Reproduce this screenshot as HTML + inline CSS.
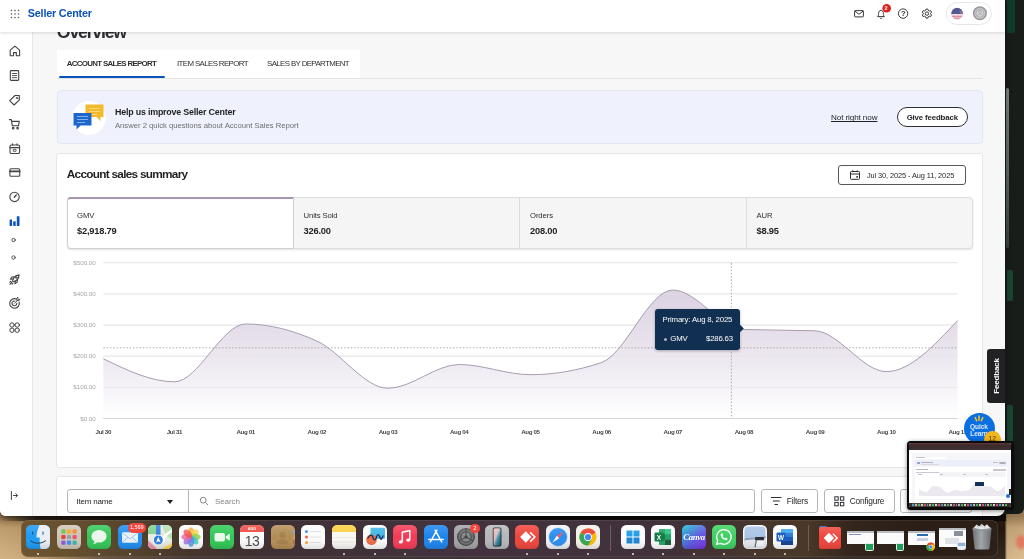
<!DOCTYPE html>
<html lang="en">
<head>
<meta charset="utf-8">
<title>Seller Center - Overview</title>
<style>
*{box-sizing:border-box;margin:0;padding:0}
html,body{width:1024px;height:559px;overflow:hidden}
body{font-family:"Liberation Sans",sans-serif;color:#2e2f32;position:relative;
 background:#2a211c;}
.abs{position:absolute}
#root{position:absolute;left:0;top:0;width:1024px;height:559px;overflow:hidden;filter:blur(.4px)}
/* desktop wallpaper */
#desk{position:absolute;left:0;top:0;width:1024px;height:559px;
 background:linear-gradient(180deg,rgba(70,45,15,.45) 516px,rgba(70,45,15,.12) 528px,rgba(255,240,210,.10) 559px),linear-gradient(90deg,#cfac7c 0px,#c8a574 20px,#9c7c52 55px,#5c4636 105px,#35282a 190px,#2b2024 420px,#2e2228 700px,#251b17 850px,#1e140e 1004.500px,#cfae82 1007px,#d8b88c 1024px);}
#desk:after{content:"";position:absolute;left:0;top:514px;width:1006px;height:7px;background:linear-gradient(90deg,rgba(20,14,12,.0) 0,rgba(20,14,12,.8) 36px,rgba(12,9,9,.95) 200px,rgba(12,9,9,.95) 1006px)}
#desk:before{content:"";position:absolute;left:1016px;top:535px;width:10px;height:14px;border-radius:50%;background:#e2705a;filter:blur(1.500px);opacity:.85}
#rstrip{position:absolute;left:1005px;top:0;width:19px;height:514px;border-radius:0 0 6px 0;background:#181d1a}
/* browser window */
#win{position:absolute;left:0;top:0;width:1005px;height:516px;background:#f7f7f8;border-radius:0 0 8px 6px;overflow:hidden;
 box-shadow:0 2px 6px rgba(0,0,0,.5)}
#topbar{position:absolute;left:0;top:0;width:1005px;height:32px;background:#fff;box-shadow:0 1px 3px rgba(0,0,0,.14);z-index:5}
#side{position:absolute;left:0;top:32px;width:33px;height:490px;background:#fff;border-right:1px solid #e6e6e8;z-index:4}
.t{position:absolute;white-space:nowrap;line-height:1}

#ov{left:56.800px;top:24.400px;font-size:17.800px;font-weight:bold;color:#2e2f32;letter-spacing:-1.25px}
#tabs{position:absolute;left:57px;top:50px;width:303px;height:28px;background:#fff}
#tabs .t{font-size:7.900px;top:10.300px;color:#2e2f32;letter-spacing:-.62px}
#tabline{position:absolute;left:57px;top:78px;width:925px;height:1px;background:#e3e4e6}
#tabact{position:absolute;left:59px;top:76px;width:106px;height:2px;background:#0b53b8;border-radius:1px}
#banner{position:absolute;left:57px;top:90px;width:926px;height:54px;background:#eff1fc;border:1px solid #e3e6f3;border-radius:4px}
.card{position:absolute;background:#fff;border:1px solid #e6e6e8;border-radius:3px}

.mk{top:212px;font-size:7.700px;color:#2e2f32;letter-spacing:-.1px}
.mv{top:226.700px;font-size:9.300px;font-weight:bold;color:#1f2023;letter-spacing:-.2px}

.btn{height:24px;background:#fff;border:1px solid #b4b5b9;border-radius:3px}
</style>
</head>
<body>
<div id="root">
<div id="desk"></div>
<div id="rstrip">
  <div class="abs" style="left:1.500px;top:0;width:8px;height:33px;background:#103b2a;border-radius:0 0 3px 0"></div>
  <div class="abs" style="left:.8px;top:88px;width:3.200px;height:160px;background:linear-gradient(#7d8882,#5a655f 60%,#39443e);border-radius:2px"></div>
  <div class="abs" style="left:2px;top:270px;width:5.500px;height:31px;background:#1b4632;border-radius:0 2px 2px 0"></div>
  <div class="abs" style="left:2px;top:405px;width:5.500px;height:37px;background:#1b4632;border-radius:0 2px 0 0"></div>
</div>
<div id="win">
  <div id="topbar">
    <div class="t" style="left:27.800px;top:7.600px;font-size:10.800px;font-weight:bold;color:#0b53b8;letter-spacing:-.2px">Seller Center</div>
    <svg class="abs" style="left:9px;top:7.500px" width="12" height="12" viewBox="0 0 12 12" fill="#55575c">
      <circle cx="2.5" cy="2.500" r=".8"/><circle cx="6" cy="2.500" r=".8"/><circle cx="9.500" cy="2.500" r=".8"/>
      <circle cx="2.5" cy="6" r=".8"/><circle cx="6" cy="6" r=".8"/><circle cx="9.500" cy="6" r=".8"/>
      <circle cx="2.5" cy="9.500" r=".8"/><circle cx="6" cy="9.500" r=".8"/><circle cx="9.500" cy="9.500" r=".8"/>
    </svg>
    <svg class="abs" style="left:850px;top:0px" width="150" height="30" viewBox="850 0 150 30" fill="none" stroke="#38393d" stroke-width="1">
      <!-- mail -->
      <rect x="854.6" y="10.600" width="8.800" height="6.300" rx=".6"/>
      <path d="M854.8 11l4.200 3.300 4.200-3.300"/>
      <!-- bell -->
      <path d="M877.6 16.600c.9-.8 1-1.800 1-3.300 0-1.800 1-3 2.400-3s2.400 1.200 2.400 3c0 1.500.1 2.500 1 3.300z" stroke-linejoin="round"/>
      <path d="M879.9 17.800c.3.500.6.700 1.100.7s.8-.2 1.100-.7"/>
      <circle cx="886.7" cy="8.300" r="4.300" fill="#e0201c" stroke="none"/>
      <!-- help -->
      <circle cx="903.1" cy="13.600" r="4.700"/>
      <!-- gear -->
      <circle cx="926.9" cy="13.600" r="1.700"/>
      <path d="M926 9.100h1.800l.4 1.300 1.100.6 1.300-.4.900 1.600-.9 1 0 .8.900 1-.9 1.600-1.300-.4-1.100.6-.4 1.300H926l-.4-1.300-1.100-.6-1.300.4-.9-1.600.9-1 0-.8-.9-1 .9-1.600 1.300.4 1.100-.6z" stroke-linejoin="round"/>
      <!-- pill -->
      <rect x="946.2" y="2.500" width="45.200" height="22" rx="11" stroke="#e6e7e9" fill="#fff"/>
      <clipPath id="fl"><circle cx="957.1" cy="13.600" r="5.800"/></clipPath>
      <g clip-path="url(#fl)" stroke="none">
        <rect x="951" y="7.500" width="12.500" height="12.500" fill="#ecc0c9"/>
        <rect x="951" y="7.500" width="12.500" height="6.600" fill="#57588f"/>
        <rect x="959.5" y="10.800" width="5" height="1" fill="#8d7aa6"/><rect x="960" y="12.500" width="5" height=".9" fill="#b58aa6"/>
        <rect x="951" y="14.100" width="13" height="1" fill="#f4e4ea"/><rect x="951" y="16" width="13" height="1.100" fill="#dc8d9f"/><rect x="951" y="18.200" width="13" height="1.200" fill="#dc8d9f"/>
      </g>
      <circle cx="979.9" cy="13.300" r="6.300" fill="#c6c6c8" stroke="#98989b" stroke-width="1.500"/>
      <circle cx="979.9" cy="13.300" r="3.900" fill="#d6d6d8" stroke="#a4a4a7" stroke-width=".7"/>
      <circle cx="979.9" cy="12.100" r="1.400" fill="none" stroke="#a0a0a3" stroke-width=".7"/>
      <path d="M977.4 16.100c.5-1.300 1.400-1.800 2.500-1.800s2 .5 2.500 1.800" fill="none" stroke="#a0a0a3" stroke-width=".7"/>
    </svg>
    <div class="t" style="left:884.4px;top:5.600px;font-size:5.500px;font-weight:bold;color:#fff">2</div>
    <div class="t" style="left:900.9px;top:9.800px;font-size:7.500px;font-weight:bold;color:#2e2f32">?</div>

  </div>
  <div id="side">
    <svg class="abs" style="left:0;top:0" width="32" height="484" viewBox="0 32 32 484" fill="none" stroke="#424347" stroke-width="1.1" stroke-linejoin="round" stroke-linecap="round">
      <!-- home -->
      <path d="M10.200 50.200l4.700-4 4.700 4v5.600h-3.300v-3.200h-2.800v3.200h-3.300z"/>
      <!-- list -->
      <rect x="10.300" y="70.600" width="8.400" height="9.800" rx=".8"/>
      <path d="M12.300 73.500h4.400M12.300 75.600h4.400M12.300 77.700h4.400" stroke-width=".9"/>
      <!-- tag -->
      <path d="M9.700 100.700l5.300-5.200 4.300 0 .1 4.300-5.300 5.200z"/>
      <circle cx="17" cy="98" r=".8" stroke-width=".8"/>
      <!-- cart -->
      <path d="M9.300 119.600h2l1 6.200h6.200l.8-4.400h-7.600"/>
      <circle cx="13.200" cy="128.200" r=".8"/><circle cx="17.600" cy="128.200" r=".8"/>
      <!-- box -->
      <rect x="10" y="145" width="9.600" height="8.500" rx="1.200"/>
      <path d="M10 147.600h9.600M12.600 145v-1.300M17 145v-1.300"/>
      <rect x="13.600" y="149.300" width="2.400" height="2" stroke-width=".8"/>
      <!-- card -->
      <rect x="9.900" y="168.800" width="9.800" height="7.500" rx="1"/>
      <path d="M9.900 171.300h9.800" stroke-width="1.800"/>
      <!-- gauge -->
      <circle cx="14.500" cy="196.900" r="4.700"/>
      <path d="M14.300 197.200l2-2.200" stroke-width="1.300"/>
      <!-- bars -->
      <g stroke="none" fill="#0b53b8">
        <rect x="9.600" y="219.400" width="2.500" height="6.600" rx=".4"/>
        <rect x="13.200" y="221.300" width="2.500" height="4.700" rx=".4"/>
        <rect x="16.800" y="216.300" width="2.700" height="9.700" rx=".4"/>
      </g>
      <circle cx="13.500" cy="240" r="1.700" stroke-width=".9"/>
      <circle cx="13.500" cy="257.500" r="1.700" stroke-width=".9"/>
      <!-- rocket -->
      <path d="M12.600 281.200c.3-2.700 2.500-5.600 6.500-6.300-.3 3.800-3 6.300-5.800 6.900z"/>
      <path d="M12.900 279l-2.600.3 1.700-2.300 1.900-.2M15.200 281.200l-.3 2.600 2.300-1.700.2-1.900M11.800 282.200l-1.700 1.900M10.700 281.300l-.9 .9M12.800 283.300l-.9.900"/>
      <circle cx="16.300" cy="277.600" r=".9" stroke-width=".8"/>
      <!-- target -->
      <path d="M19.100 302a4.800 4.800 0 1 1-2.700-3"/>
      <path d="M16.800 303.300a2.400 2.400 0 1 1-1.900-2.300"/>
      <path d="M14.500 303.300l3.200-3.200M16.800 298.600l.1 2 2 .1 1-1.100-1.800-.3-.3-1.800z" stroke-width=".9"/>
      <!-- grid -->
      <circle cx="12" cy="325" r="2.200" stroke-width="1"/><circle cx="17.200" cy="325" r="2.200" stroke-width="1"/>
      <circle cx="12" cy="330.200" r="2.200" stroke-width="1"/><circle cx="17.200" cy="330.200" r="2.200" stroke-width="1"/>
      <!-- expand -->
      <path d="M11.400 491.500v8M13.500 495.500h3.800M15.800 493.700l1.800 1.800-1.800 1.800" stroke-width="1"/>
    </svg>
  </div>
  <div id="content">
    <div class="t" id="ov">Overview</div>
    <div id="tabs">
      <div class="t" style="left:9.800px;font-weight:bold;letter-spacing:-.68px">ACCOUNT SALES REPORT</div>
      <div class="t" style="left:120px">ITEM SALES REPORT</div>
      <div class="t" style="left:210px">SALES BY DEPARTMENT</div>
    </div>
    <div id="tabline"></div><div id="tabact"></div>
    <div id="banner">
      <div class="abs" style="left:14px;top:10px;width:34px;height:34px;border-radius:50%;background:#fff"></div>
      <svg class="abs" style="left:14px;top:10px" width="34" height="34" viewBox="0 0 34 34">
        <path d="M13.500 3.500h18v12.500h-3v4l-4-4h-11z" fill="#f2b92c"/>
        <path d="M17 7.500h11M17 10.500h11M17 13.500h8" stroke="#f7d678" stroke-width="1"/>
        <path d="M1.500 12h18v12.500h-11l-4 4v-4h-3z" fill="#1f66cc"/>
        <path d="M5 15.500h11M5 18.500h11M5 21.500h8" stroke="#7fb0ee" stroke-width="1"/>
      </svg>
      <div class="t" style="left:57px;top:17px;font-size:8.900px;font-weight:bold;color:#1f2023;letter-spacing:-.2px">Help us improve Seller Center</div>
      <div class="t" style="left:57px;top:30.800px;font-size:7.700px;color:#6d6e71;letter-spacing:-.02px">Answer 2 quick questions about Account Sales Report</div>
      <div class="t" style="left:773px;top:23.300px;font-size:8.100px;color:#1f2023;text-decoration:underline;letter-spacing:-.1px">Not right now</div>
      <div class="abs" style="left:839px;top:16.200px;width:70.500px;height:19.800px;border:1px solid #2e2f32;border-radius:10px;background:#fff"></div>
      <div class="t" style="left:839px;top:22.700px;width:70.500px;text-align:center;font-size:7.850px;font-weight:bold;color:#1f2023;letter-spacing:-.15px">Give feedback</div>
    </div>

    <div class="card" style="left:56px;top:153px;width:927px;height:315px"></div>
    <div class="t" style="left:66.800px;top:169.300px;font-size:11.800px;font-weight:bold;color:#1f2023;letter-spacing:-.72px">Account sales summary</div>
    <div class="abs" style="left:838px;top:165px;width:128px;height:20px;border:1px solid #55575c;border-radius:3px;background:#fff"></div>
    <svg class="abs" style="left:849px;top:169px" width="12" height="12" viewBox="0 0 12 12" fill="none" stroke="#2e2f32" stroke-width="1"><rect x="1.500" y="2.500" width="9" height="7.800" rx=".8"/><path d="M1.500 5h9M3.800 1.300v1.800M8.200 1.300v1.800"/><rect x="7.300" y="7" width="1.600" height="1.600" fill="#2e2f32" stroke="none"/></svg>
    <div class="t" style="left:867px;top:171.500px;font-size:7.400px;color:#1f2023;letter-spacing:-.1px">Jul 30, 2025 - Aug 11, 2025</div>
    <div class="abs" style="left:66.500px;top:197px;width:906px;height:51.500px;background:#f5f5f6;border:1px solid #dcdde0;border-radius:4px;box-shadow:0 1px 2px rgba(0,0,0,.12)"></div>
    <div class="abs" style="left:66.500px;top:197px;width:227px;height:51.500px;background:#fff;border:1px solid #d0d1d4;border-top:2px solid #a896b0;border-radius:4px 0 0 4px"></div>
    <div class="abs" style="left:519px;top:198px;width:1px;height:50px;background:#dcdde0"></div>
    <div class="abs" style="left:746px;top:198px;width:1px;height:50px;background:#dcdde0"></div>
    <div class="t mk" style="left:77px">GMV</div><div class="t mv" style="left:77px">$2,918.79</div>
    <div class="t mk" style="left:303.500px">Units Sold</div><div class="t mv" style="left:303.500px">326.00</div>
    <div class="t mk" style="left:530px">Orders</div><div class="t mv" style="left:530px">208.00</div>
    <div class="t mk" style="left:756.500px">AUR</div><div class="t mv" style="left:756.500px">$8.95</div>
    <svg class="abs" style="left:56px;top:255px" width="927" height="190" viewBox="56 255 927 190">
      <defs><linearGradient id="ag" x1="0" y1="0" x2="0" y2="1"><stop offset="0" stop-color="#d9cfe0"/><stop offset=".55" stop-color="#ece7f0"/><stop offset="1" stop-color="#ffffff"/></linearGradient></defs>
      <g stroke="#e9e9eb" stroke-width="1" fill="none"><path d="M103.3 262.7H957.6"/><path d="M103.3 293.9H957.6"/><path d="M103.3 325.0H957.6"/><path d="M103.3 356.2H957.6"/><path d="M103.3 387.3H957.6"/><path d="M103.3 418.5H957.6"/></g>
      <path d="M103.3 358.7 C127.0 370.2 150.8 381.8 174.5 381.8 C198.2 381.8 221.9 324.0 245.7 324.0 C269.4 324.0 293.1 330.3 316.8 341.0 C340.6 351.7 364.3 388.3 388.0 388.3 C411.7 388.3 435.5 364.5 459.2 364.5 C482.9 364.5 506.7 374.7 530.4 374.7 C554.1 374.7 577.8 370.6 601.6 362.5 C625.3 354.4 649.0 290.0 672.7 290.0 C696.5 290.0 720.2 328.6 743.9 329.5 C767.6 330.4 791.4 329.9 815.1 330.8 C838.8 331.7 862.6 371.6 886.3 371.6 C910.0 371.6 933.7 346.1 957.5 320.6 L957.6 418.5 L103.3 418.5 Z" fill="url(#ag)" opacity=".95"/>
      <g stroke="#e4e2e8" stroke-width=".8" fill="none" opacity=".7"><path d="M103.3 262.7H957.6"/><path d="M103.3 293.9H957.6"/><path d="M103.3 325.0H957.6"/><path d="M103.3 356.2H957.6"/><path d="M103.3 387.3H957.6"/><path d="M103.3 418.5H957.6"/></g>
      <path d="M103.3 358.7 C127.0 370.2 150.8 381.8 174.5 381.8 C198.2 381.8 221.9 324.0 245.7 324.0 C269.4 324.0 293.1 330.3 316.8 341.0 C340.6 351.7 364.3 388.3 388.0 388.3 C411.7 388.3 435.5 364.5 459.2 364.5 C482.9 364.5 506.7 374.7 530.4 374.7 C554.1 374.7 577.8 370.6 601.6 362.5 C625.3 354.4 649.0 290.0 672.7 290.0 C696.5 290.0 720.2 328.6 743.9 329.5 C767.6 330.4 791.4 329.9 815.1 330.8 C838.8 331.7 862.6 371.6 886.3 371.6 C910.0 371.6 933.7 346.1 957.5 320.6" fill="none" stroke="#a79cb0" stroke-width="1"/>
      <path d="M103.300 347.800H957.600" stroke="#9a9a9e" stroke-width=".8" stroke-dasharray="1.500 1.800" fill="none"/>
      <path d="M731.400 263V418.500" stroke="#9a9a9e" stroke-width=".8" stroke-dasharray="1.500 1.800" fill="none"/>
      <path d="M103.300 418.500H957.600" stroke="#d5d5d8" stroke-width="1" fill="none"/>
      <g font-family="Liberation Sans, sans-serif" font-size="6.250" fill="#a4a5a9" letter-spacing="0"><text x="95.800" y="264.7" text-anchor="end">$500.00</text><text x="95.800" y="295.9" text-anchor="end">$400.00</text><text x="95.800" y="327.0" text-anchor="end">$300.00</text><text x="95.800" y="358.2" text-anchor="end">$200.00</text><text x="95.800" y="389.3" text-anchor="end">$100.00</text><text x="95.800" y="420.5" text-anchor="end">$0.00</text></g>
      <g font-family="Liberation Sans, sans-serif" font-size="6.200" font-weight="bold" fill="#47484c" letter-spacing="-.35"><text x="103.3" y="434.300" text-anchor="middle">Jul 30</text><text x="174.5" y="434.300" text-anchor="middle">Jul 31</text><text x="245.7" y="434.300" text-anchor="middle">Aug 01</text><text x="316.8" y="434.300" text-anchor="middle">Aug 02</text><text x="388.0" y="434.300" text-anchor="middle">Aug 03</text><text x="459.2" y="434.300" text-anchor="middle">Aug 04</text><text x="530.4" y="434.300" text-anchor="middle">Aug 05</text><text x="601.6" y="434.300" text-anchor="middle">Aug 06</text><text x="672.7" y="434.300" text-anchor="middle">Aug 07</text><text x="743.9" y="434.300" text-anchor="middle">Aug 08</text><text x="815.1" y="434.300" text-anchor="middle">Aug 09</text><text x="886.3" y="434.300" text-anchor="middle">Aug 10</text><text x="957.5" y="434.300" text-anchor="middle">Aug 11</text></g>
    </svg>
    <div class="abs" style="left:655px;top:308.800px;width:85px;height:41px;background:#112f50;border-radius:3px;box-shadow:0 1px 3px rgba(0,0,0,.3)"></div>
    <div class="abs" style="left:738.300px;top:326.400px;width:4.600px;height:4.600px;background:#112f50;transform:rotate(45deg)"></div>
    <div class="t" style="left:662.500px;top:316px;font-size:7.800px;color:#fff;letter-spacing:-.15px">Primary: Aug 8, 2025</div>
    <div class="abs" style="left:663.500px;top:337.500px;width:3px;height:3px;border-radius:50%;background:#b9a9c6"></div>
    <div class="t" style="left:670.300px;top:335px;font-size:7.800px;color:#fff;letter-spacing:-.2px">GMV</div>
    <div class="t" style="left:706px;top:335px;font-size:7.800px;color:#fff;letter-spacing:-.2px">$286.63</div>

    <div class="card" style="left:56px;top:476px;width:927px;height:60px"></div>
    <div class="abs btn" style="left:67px;top:489px;width:121.500px;border-radius:3px 0 0 3px"></div>
    <div class="abs btn" style="left:187.500px;top:489px;width:567.500px;border-radius:0 3px 3px 0"></div>
    <div class="t" style="left:76.500px;top:497.500px;font-size:8px;color:#1f2023;letter-spacing:-.2px">Item name</div>
    <div class="abs" style="left:166.500px;top:500px;width:0;height:0;border-left:3.500px solid transparent;border-right:3.500px solid transparent;border-top:4.200px solid #1f2023"></div>
    <svg class="abs" style="left:199px;top:496px" width="10" height="10" viewBox="0 0 10 10" fill="none" stroke="#85868a" stroke-width="1"><circle cx="4.200" cy="4.200" r="2.900"/><path d="M6.400 6.400l2.600 2.600"/></svg>
    <div class="t" style="left:215px;top:497.500px;font-size:8px;color:#85868a;letter-spacing:-.1px">Search</div>
    <div class="abs btn" style="left:760.500px;top:489px;width:57.500px"></div>
    <svg class="abs" style="left:770px;top:495px" width="13" height="12" viewBox="0 0 13 12" fill="none" stroke="#2e2f32" stroke-width="1"><path d="M1 2.500h10.500M2.800 6h7M4.500 9.500h3.500"/></svg>
    <div class="t" style="left:786.800px;top:497.300px;font-size:8.400px;color:#1f2023;letter-spacing:-.25px">Filters</div>
    <div class="abs btn" style="left:823.500px;top:489px;width:71px"></div>
    <svg class="abs" style="left:834px;top:495.500px" width="11" height="11" viewBox="0 0 11 11" fill="none" stroke="#2e2f32" stroke-width="1"><rect x=".8" y=".8" width="3.400" height="3.400"/><rect x="6.400" y=".8" width="3.400" height="3.400"/><rect x=".8" y="6.400" width="3.400" height="3.400"/><rect x="6.400" y="6.400" width="3.400" height="3.400"/></svg>
    <div class="t" style="left:849.700px;top:497.300px;font-size:8.400px;color:#1f2023;letter-spacing:-.2px">Configure</div>
    <div class="abs btn" style="left:900px;top:489px;width:72px"></div>
    <!-- feedback tab -->
    <div class="abs" style="left:987px;top:349px;width:19px;height:54px;background:#222224;border-radius:3px 0 0 3px"></div>
    <div class="t" style="left:996.500px;top:376px;font-size:8px;font-weight:bold;color:#fff;transform:translate(-50%,-50%) rotate(-90deg);letter-spacing:-.15px">Feedback</div>
    <!-- quick learn -->
    <div class="abs" style="left:963.500px;top:413px;width:31px;height:31px;border-radius:50%;background:#0a6fe0"></div>
    <svg class="abs" style="left:971px;top:414.500px" width="16" height="9" viewBox="0 0 16 9" stroke="#ffc220" stroke-width="1.500" stroke-linecap="round"><path d="M8 1v4.200M4.200 2.600l1.500 3.200M11.800 2.600l-1.500 3.200"/></svg>
    <div class="t" style="left:963.500px;top:422.700px;width:31px;text-align:center;font-size:6.600px;font-weight:bold;color:#dbe9ff;line-height:7.500px;white-space:normal;letter-spacing:-.1px">Quick Learn</div>
    <div class="abs" style="left:983.800px;top:431px;width:16.800px;height:16.800px;border-radius:50%;background:#f2b61c"></div>
    <div class="t" style="left:983.800px;top:435.500px;width:16.800px;text-align:center;font-size:6.800px;color:#4a3a10">12</div>
  </div>
</div>
<!--PIP-->
<div class="abs" style="left:907px;top:440.500px;width:106.500px;height:69px;background:#0c0c0d;border-radius:3.500px;box-shadow:0 1px 4px rgba(0,0,0,.45)"></div>
<div class="abs" style="left:909.300px;top:442.700px;width:102.100px;height:64.500px;background:#fbfbfc;border-radius:1.500px;overflow:hidden">
  <div class="abs" style="left:0;top:0;width:103px;height:7.600px;background:linear-gradient(#6a3a3a 0,#4a3030 1.200px,#3a2a2b 3px,#3f3032 100%)"></div>
  <div class="abs" style="left:0;top:7.600px;width:103px;height:2.400px;background:#fff"></div>
  <div class="abs" style="left:0;top:10px;width:3.200px;height:50px;background:#fff"></div>
  <div class="abs" style="left:3.200px;top:10px;width:99px;height:50px;background:#f6f6f8"></div>
  <div class="abs" style="left:6px;top:14px;width:30px;height:2.600px;background:#fff"></div>
  <div class="abs" style="left:6.600px;top:14.800px;width:9px;height:1px;background:#c4c6cc"></div>
  <div class="abs" style="left:6px;top:17.600px;width:92px;height:5.800px;background:#eceffa;border-radius:.8px"></div>
  <div class="abs" style="left:7.500px;top:19.500px;width:3px;height:2.200px;background:#8aa6d8;border-radius:.5px"></div>
  <div class="abs" style="left:12px;top:19.400px;width:12px;height:.9px;background:#b4b6bc"></div>
  <div class="abs" style="left:12px;top:21.200px;width:18px;height:.7px;background:#d8d9de"></div>
  <div class="abs" style="left:84px;top:19.700px;width:4.500px;height:.9px;background:#c0c0c4"></div>
  <div class="abs" style="left:90px;top:19.200px;width:6.500px;height:2px;border:.5px solid #b0b0b4;border-radius:1px"></div>
  <div class="abs" style="left:6px;top:24.500px;width:92px;height:32px;background:#fff;border-radius:.8px"></div>
  <div class="abs" style="left:7.200px;top:26.300px;width:12px;height:1.100px;background:#b4b6bc"></div>
  <div class="abs" style="left:84px;top:26px;width:12.500px;height:2px;border:.5px solid #c8c8cc;border-radius:.5px"></div>
  <div class="abs" style="left:7.200px;top:29px;width:90px;height:5px;background:#f4f4f6"></div>
  <div class="abs" style="left:7.200px;top:29px;width:22.500px;height:5px;background:#fff;border-top:.5px solid #d0c6d6"></div>
  <div class="abs" style="left:8.300px;top:31.800px;width:4px;height:.9px;background:#c2c2c6"></div>
  <div class="abs" style="left:30.800px;top:31.800px;width:3px;height:.9px;background:#c2c2c6"></div>
  <div class="abs" style="left:53.300px;top:31.800px;width:3px;height:.9px;background:#c2c2c6"></div>
  <div class="abs" style="left:75.800px;top:31.800px;width:2.500px;height:.9px;background:#c2c2c6"></div>
  <svg class="abs" style="left:10px;top:36px" width="86" height="17" viewBox="103 262 855 157" preserveAspectRatio="none"><path d="M103 359C127 367 150 382 174 382S222 324 246 324 293 329 317 341 364 388 388 388 435 364 459 364 506 375 530 375 578 372 601 362 649 290 673 290 720 329 744 329 791 327 815 331 862 372 886 372 934 346 958 321V419H103Z" fill="#ece8f0"/></svg>
  <div class="abs" style="left:65.800px;top:39.400px;width:9px;height:4.400px;background:#12315a;border-radius:.5px"></div>
  <div class="abs" style="left:6px;top:57.500px;width:92px;height:4px;background:#fff"></div>
  <div class="abs" style="left:100.200px;top:46.500px;width:2px;height:5.500px;background:#222"></div>
  <div class="abs" style="left:97px;top:51.500px;width:3.600px;height:3.600px;border-radius:50%;background:#2a7be0"></div>
  <div class="abs" style="left:0;top:60px;width:103px;height:4.600px;background:#3a2d31"></div>
  <div class="abs" style="left:2.500px;top:60.700px;width:98px;height:3.200px;background:linear-gradient(90deg,#5a4a38 0,#4a3a36 20%,#3f3036 50%,#3a2c2c 100%)"></div>
  <div class="abs" style="left:3px;top:61px;width:96px;height:2.700px;opacity:.9;background:repeating-linear-gradient(90deg,#4aa4ee 0 1.900px,transparent 1.900px 2.900px,#cfc8be 2.900px 4.800px,transparent 4.800px 5.800px,#48c868 5.800px 7.700px,transparent 7.700px 8.700px,#e4e4e8 8.700px 10.600px,transparent 10.600px 11.600px,#e0625a 11.600px 13.500px,transparent 13.500px 14.500px)"></div>
</div>
<!--/PIP-->
<!--DOCK-->
<svg width="0" height="0" style="position:absolute"><defs><linearGradient id="gl" x1="0" y1="0" x2="0" y2="1"><stop offset="0" stop-color="#fff" stop-opacity=".16"/><stop offset=".5" stop-color="#fff" stop-opacity="0"/><stop offset="1" stop-color="#000" stop-opacity=".12"/></linearGradient></defs></svg>
<div class="abs" style="left:21px;top:520px;width:977px;height:37px;border-radius:7px;background:linear-gradient(90deg,#6e5530 0px,#64502f 50px,#55432e 110px,#46362c 165px,#3e3033 235px,#42333e 420px,#40313b 640px,#45352f 715px,#4a3828 785px,#34261d 830px,#2a1e17 900px,#2c2018 977px);box-shadow:inset 0 0 0 .6px rgba(255,255,255,.16)"></div>
<svg class="abs" style="left:26.3px;top:525.0px" width="24.0" height="24.0" viewBox="0 0 24 24"><defs><clipPath id="c263"><rect width="24" height="24" rx="5.4"/></clipPath></defs><g clip-path="url(#c263)"><rect width="24" height="24" fill="#1e9af2"/><rect width="24" height="24" fill="#1e9af2"/><path d="M13.500 0C11.500 4.500 10.600 8.500 10.400 12.500h3.300c-.2 4 .2 8 1 11.500H24V0z" fill="#e9eef5"/><path d="M6.800 7v2.200M17 7v2.200" stroke="#1b3a5e" stroke-width="1" stroke-linecap="round"/><path d="M4.500 15.800c4.500 3.300 10.500 3.300 15 0" stroke="#1b3a5e" stroke-width="1" fill="none" stroke-linecap="round"/><rect width="24" height="24" fill="url(#gl)"/></g></svg>
<svg class="abs" style="left:57.0px;top:525.0px" width="24.0" height="24.0" viewBox="0 0 24 24"><defs><clipPath id="c570"><rect width="24" height="24" rx="5.4"/></clipPath></defs><g clip-path="url(#c570)"><rect width="24" height="24" fill="#cfc4b8"/><rect x="4.3" y="4.3" width="4.200" height="4.200" rx="1" fill="#6cc04a"/><rect x="9.9" y="4.3" width="4.200" height="4.200" rx="1" fill="#f5a623"/><rect x="15.5" y="4.3" width="4.200" height="4.200" rx="1" fill="#f08a34"/><rect x="4.3" y="9.9" width="4.200" height="4.200" rx="1" fill="#e0403a"/><rect x="9.9" y="9.9" width="4.200" height="4.200" rx="1" fill="#9aa0a6"/><rect x="15.5" y="9.9" width="4.200" height="4.200" rx="1" fill="#e8546c"/><rect x="4.3" y="15.5" width="4.200" height="4.200" rx="1" fill="#8a5bd6"/><rect x="9.9" y="15.5" width="4.200" height="4.200" rx="1" fill="#3f8ef0"/><rect x="15.5" y="15.5" width="4.200" height="4.200" rx="1" fill="#35b8a8"/><rect width="24" height="24" fill="url(#gl)"/></g></svg>
<svg class="abs" style="left:87.3px;top:525.0px" width="24.0" height="24.0" viewBox="0 0 24 24"><defs><clipPath id="c873"><rect width="24" height="24" rx="5.4"/></clipPath></defs><g clip-path="url(#c873)"><rect width="24" height="24" fill="#34c759"/><ellipse cx="12" cy="11.300" rx="7.600" ry="6.300" fill="#eaf7ea"/><path d="M7.500 15.500c.2 1.600-.6 2.800-1.700 3.500 2 .1 3.600-.6 4.700-1.900z" fill="#eaf7ea"/><rect width="24" height="24" fill="url(#gl)"/></g></svg>
<svg class="abs" style="left:117.7px;top:525.0px" width="24.0" height="24.0" viewBox="0 0 24 24"><defs><clipPath id="c1177"><rect width="24" height="24" rx="5.4"/></clipPath></defs><g clip-path="url(#c1177)"><rect width="24" height="24" fill="#1f8df0"/><rect x="4" y="7.200" width="16" height="10.600" rx="1.200" fill="#e8f2fc"/><path d="M4.300 7.800l7.700 6 7.700-6M4.300 17.400l5.600-5M19.700 17.400l-5.600-5" stroke="#8fb8e6" stroke-width=".8" fill="none"/><rect width="24" height="24" fill="url(#gl)"/></g></svg>
<svg class="abs" style="left:148.3px;top:525.0px" width="24.0" height="24.0" viewBox="0 0 24 24"><defs><clipPath id="c1483"><rect width="24" height="24" rx="5.4"/></clipPath></defs><g clip-path="url(#c1483)"><rect width="24" height="24" fill="#e8ecdf"/><rect width="24" height="24" fill="#e8ecdf"/><path d="M0 0h9v9H0z" fill="#7fd08a"/><path d="M14 0h10v14c-4-1-8-6-10-14z" fill="#b5e3b0"/><path d="M24 6c-5 2-9 6-9 12" stroke="#fff" stroke-width="2.500" fill="none"/><path d="M0 15l9 9H0z" fill="#f08fb0"/><path d="M14 24l10-6v6z" fill="#ffd34d"/><path d="M8 0h4.500v13H8z" fill="#2f7de0"/><circle cx="10.300" cy="15" r="5" fill="#2f7de0" stroke="#fff" stroke-width="1"/><path d="M10.300 11.800l2.300 5.600-2.300-1.200-2.300 1.200z" fill="#fff"/><rect width="24" height="24" fill="url(#gl)"/></g></svg>
<svg class="abs" style="left:179.0px;top:525.0px" width="24.0" height="24.0" viewBox="0 0 24 24"><defs><clipPath id="c1790"><rect width="24" height="24" rx="5.4"/></clipPath></defs><g clip-path="url(#c1790)"><rect width="24" height="24" fill="#fbfbfb"/><ellipse cx="12.00" cy="7.50" rx="5.200" ry="3.200" transform="rotate(-90 12.00 7.50)" fill="#f6a623" opacity=".82"/><ellipse cx="15.18" cy="8.82" rx="5.200" ry="3.200" transform="rotate(-45 15.18 8.82)" fill="#f3d03e" opacity=".82"/><ellipse cx="16.50" cy="12.00" rx="5.200" ry="3.200" transform="rotate(0 16.50 12.00)" fill="#8ccf4d" opacity=".82"/><ellipse cx="15.18" cy="15.18" rx="5.200" ry="3.200" transform="rotate(45 15.18 15.18)" fill="#3ec6c0" opacity=".82"/><ellipse cx="12.00" cy="16.50" rx="5.200" ry="3.200" transform="rotate(90 12.00 16.50)" fill="#4a90e2" opacity=".82"/><ellipse cx="8.82" cy="15.18" rx="5.200" ry="3.200" transform="rotate(135 8.82 15.18)" fill="#9b6be0" opacity=".82"/><ellipse cx="7.50" cy="12.00" rx="5.200" ry="3.200" transform="rotate(180 7.50 12.00)" fill="#e86aa6" opacity=".82"/><ellipse cx="8.82" cy="8.82" rx="5.200" ry="3.200" transform="rotate(225 8.82 8.82)" fill="#f0524f" opacity=".82"/><rect width="24" height="24" fill="url(#gl)"/></g></svg>
<svg class="abs" style="left:209.6px;top:525.0px" width="24.0" height="24.0" viewBox="0 0 24 24"><defs><clipPath id="c2096"><rect width="24" height="24" rx="5.4"/></clipPath></defs><g clip-path="url(#c2096)"><rect width="24" height="24" fill="#30c755"/><rect x="4.500" y="8" width="10.500" height="8.400" rx="2" fill="#e8f8ea"/><path d="M15.800 11.200l4-2.600v7.200l-4-2.600z" fill="#e8f8ea"/><rect width="24" height="24" fill="url(#gl)"/></g></svg>
<svg class="abs" style="left:240.3px;top:525.0px" width="24.0" height="24.0" viewBox="0 0 24 24"><defs><clipPath id="c2403"><rect width="24" height="24" rx="5.4"/></clipPath></defs><g clip-path="url(#c2403)"><rect width="24" height="24" fill="#fbfbfb"/><rect width="24" height="7" fill="#ef4b43"/><text x="12" y="5.300" font-family="Liberation Sans, sans-serif" font-size="3.800" font-weight="bold" fill="#fff" text-anchor="middle">AUG</text><text x="12" y="20.600" font-family="Liberation Sans, sans-serif" font-size="14" fill="#48484a" text-anchor="middle" letter-spacing="-.6">13</text><rect width="24" height="24" fill="url(#gl)"/></g></svg>
<svg class="abs" style="left:270.8px;top:525.0px" width="24.0" height="24.0" viewBox="0 0 24 24"><defs><clipPath id="c2708"><rect width="24" height="24" rx="5.4"/></clipPath></defs><g clip-path="url(#c2708)"><rect width="24" height="24" fill="#b48d56"/><circle cx="11.500" cy="9.800" r="3.200" fill="#a4814e"/><path d="M5.500 19c.6-3.600 3-5 6-5s5.400 1.400 6 5z" fill="#a4814e"/><circle cx="11.500" cy="12" r="7.600" fill="none" stroke="#a88650" stroke-width=".7"/><rect x="22" y="5" width="2" height="4" fill="#8aa0b0"/><rect x="22" y="10" width="2" height="4" fill="#c8a060"/><rect x="22" y="15" width="2" height="4" fill="#b07050"/><rect width="24" height="24" fill="url(#gl)"/></g></svg>
<svg class="abs" style="left:301.3px;top:525.0px" width="24.0" height="24.0" viewBox="0 0 24 24"><defs><clipPath id="c3013"><rect width="24" height="24" rx="5.4"/></clipPath></defs><g clip-path="url(#c3013)"><rect width="24" height="24" fill="#fbfbfb"/><circle cx="5.500" cy="6.500" r="1.500" fill="#3f8ef0"/><circle cx="5.500" cy="12" r="1.500" fill="#ef5b4c"/><circle cx="5.500" cy="17.500" r="1.500" fill="#f5a623"/><path d="M9 6.500h11M9 12h11M9 17.500h11" stroke="#dcdce0" stroke-width=".9"/><rect width="24" height="24" fill="url(#gl)"/></g></svg>
<svg class="abs" style="left:331.8px;top:525.0px" width="24.0" height="24.0" viewBox="0 0 24 24"><defs><clipPath id="c3318"><rect width="24" height="24" rx="5.4"/></clipPath></defs><g clip-path="url(#c3318)"><rect width="24" height="24" fill="#faf8f2"/><rect width="24" height="7" fill="#fbd040"/><path d="M0 12.500h24M0 17h24" stroke="#e4e1da" stroke-width=".7"/><rect width="24" height="24" fill="url(#gl)"/></g></svg>
<svg class="abs" style="left:362.6px;top:525.0px" width="24.0" height="24.0" viewBox="0 0 24 24"><defs><clipPath id="c3626"><rect width="24" height="24" rx="5.4"/></clipPath></defs><g clip-path="url(#c3626)"><rect width="24" height="24" fill="#fbfbfb"/><rect x="7.500" y="2.800" width="14.500" height="11" rx="1" fill="#41b8e6"/><circle cx="8.500" cy="14.800" r="5.300" fill="#ee6b3f"/><path d="M5 13c2-4 4-4 5-.5s2.500 3 3.500-.5 2.500-3 3.500.5 2 1 3-1.500" stroke="#1c2f5e" stroke-width="1.400" fill="none" stroke-linecap="round"/><rect width="24" height="24" fill="url(#gl)"/></g></svg>
<svg class="abs" style="left:393.2px;top:525.0px" width="24.0" height="24.0" viewBox="0 0 24 24"><defs><clipPath id="c3932"><rect width="24" height="24" rx="5.4"/></clipPath></defs><g clip-path="url(#c3932)"><rect width="24" height="24" fill="#f43a55"/><path d="M9.300 16.800V7.300l7.500-1.700v9.300" stroke="#fff" stroke-width="1.500" fill="none" stroke-linejoin="round"/><ellipse cx="7.700" cy="16.900" rx="2" ry="1.600" fill="#fff"/><ellipse cx="15.200" cy="15.100" rx="2" ry="1.600" fill="#fff"/><rect width="24" height="24" fill="url(#gl)"/></g></svg>
<svg class="abs" style="left:423.8px;top:525.0px" width="24.0" height="24.0" viewBox="0 0 24 24"><defs><clipPath id="c4238"><rect width="24" height="24" rx="5.4"/></clipPath></defs><g clip-path="url(#c4238)"><rect width="24" height="24" fill="#1c84ee"/><path d="M12.900 5.200L6.300 17M11.100 5.200l6.600 11.800M4.800 14.600h14.400" stroke="#fff" stroke-width="1.500" stroke-linecap="round" fill="none"/><rect width="24" height="24" fill="url(#gl)"/></g></svg>
<svg class="abs" style="left:453.8px;top:525.0px" width="24.0" height="24.0" viewBox="0 0 24 24"><defs><clipPath id="c4538"><rect width="24" height="24" rx="5.4"/></clipPath></defs><g clip-path="url(#c4538)"><rect width="24" height="24" fill="#a0a2a4"/><circle cx="12" cy="12" r="8.300" fill="#6c6e70" stroke="#444547" stroke-width="1.300"/><circle cx="12" cy="12" r="5.200" fill="#87898b" stroke="#444547" stroke-width="1"/><circle cx="12" cy="12" r="1.500" fill="#3f4042"/><path d="M12 12V4M12 12l7 4M12 12l-7 4" stroke="#404143" stroke-width="1"/><rect width="24" height="24" fill="url(#gl)"/></g></svg>
<svg class="abs" style="left:484.6px;top:525.0px" width="24.0" height="24.0" viewBox="0 0 24 24"><defs><clipPath id="c4846"><rect width="24" height="24" rx="5.4"/></clipPath></defs><g clip-path="url(#c4846)"><rect width="24" height="24" fill="#b6b7ba"/><rect x="7.800" y="2.500" width="8.600" height="19" rx="1.800" fill="#111"/><defs><linearGradient id="ip" x1="0" y1="0" x2="1" y2="1"><stop offset="0" stop-color="#f6b8b0"/><stop offset=".4" stop-color="#d8c0c4"/><stop offset=".62" stop-color="#3a8aa8"/><stop offset="1" stop-color="#0e4a66"/></linearGradient></defs><rect x="8.500" y="3.200" width="7.200" height="17.600" rx="1.300" fill="url(#ip)"/><rect width="24" height="24" fill="url(#gl)"/></g></svg>
<svg class="abs" style="left:515.2px;top:525.0px" width="24.0" height="24.0" viewBox="0 0 24 24"><defs><clipPath id="c5152"><rect width="24" height="24" rx="5.4"/></clipPath></defs><g clip-path="url(#c5152)"><rect width="24" height="24" fill="#ef443b"/><path d="M10.800 6.300l5.700 5.700-5.700 5.700-5.700-5.700z" fill="#fff"/><path d="M15.200 7.400l4.600 4.600-4.600 4.600" stroke="#fff" stroke-width="1.600" fill="none"/><rect width="24" height="24" fill="url(#gl)"/></g></svg>
<svg class="abs" style="left:545.8px;top:525.0px" width="24.0" height="24.0" viewBox="0 0 24 24"><defs><clipPath id="c5458"><rect width="24" height="24" rx="5.4"/></clipPath></defs><g clip-path="url(#c5458)"><rect width="24" height="24" fill="#eef0f4"/><circle cx="12" cy="12" r="9.300" fill="#2b8ef0"/><circle cx="12" cy="12" r="9.300" fill="none" stroke="#d8e8f8" stroke-width=".5"/><path d="M17.500 6.500l-4.300 6.700-2.400-2.400z" fill="#f55"/><path d="M6.500 17.500l4.300-6.700 2.400 2.400z" fill="#fff"/><rect width="24" height="24" fill="url(#gl)"/></g></svg>
<svg class="abs" style="left:576.4px;top:525.0px" width="24.0" height="24.0" viewBox="0 0 24 24"><defs><clipPath id="c5764"><rect width="24" height="24" rx="5.4"/></clipPath></defs><g clip-path="url(#c5764)"><rect width="24" height="24" fill="#f3f0ea"/><circle cx="12" cy="12" r="8.600" fill="#fbbc05"/><path d="M12 12L4.550 7.700A8.600 8.600 0 0 1 19.450 7.700z" fill="#ea4335"/><path d="M12 3.400A8.600 8.600 0 0 1 19.450 7.700H12z" fill="#ea4335"/><path d="M12 12L4.550 7.700A8.600 8.600 0 0 0 12 20.600l3.700-6.400z" fill="#34a853"/><path d="M12 12h7.450" stroke="#fbbc05"/><circle cx="12" cy="12" r="3.900" fill="#fff"/><circle cx="12" cy="12" r="3.100" fill="#4285f4"/><rect width="24" height="24" fill="url(#gl)"/></g></svg>
<div class="abs" style="left:610.300px;top:525px;width:1px;height:26px;background:rgba(255,255,255,.22)"></div>
<svg class="abs" style="left:620.6px;top:525.0px" width="24.0" height="24.0" viewBox="0 0 24 24"><defs><clipPath id="c6206"><rect width="24" height="24" rx="5.4"/></clipPath></defs><g clip-path="url(#c6206)"><rect width="24" height="24" fill="#fbfbfd"/><rect x="5.500" y="5.500" width="6" height="6" fill="#1f9be8"/><rect x="12.500" y="5.500" width="6" height="6" fill="#1f9be8"/><rect x="5.500" y="12.500" width="6" height="6" fill="#1a86d8"/><rect x="12.500" y="12.500" width="6" height="6" fill="#1a86d8"/><rect width="24" height="24" fill="url(#gl)"/></g></svg>
<svg class="abs" style="left:651.2px;top:525.0px" width="24.0" height="24.0" viewBox="0 0 24 24"><defs><clipPath id="c6512"><rect width="24" height="24" rx="5.4"/></clipPath></defs><g clip-path="url(#c6512)"><rect width="24" height="24" fill="#fbfbfd"/><rect x="8" y="4" width="12" height="16" rx="1" fill="#21a366"/><rect x="14" y="4" width="6" height="5.300" fill="#33c481"/><rect x="14" y="14.700" width="6" height="5.300" fill="#185c37"/><rect x="8" y="9.300" width="6" height="5.400" fill="#107c41"/><rect x="3.500" y="7.500" width="9" height="9" rx="1" fill="#107c41"/><text x="8" y="14.600" font-family="Liberation Sans, sans-serif" font-size="6.500" font-weight="bold" fill="#fff" text-anchor="middle">X</text><rect width="24" height="24" fill="url(#gl)"/></g></svg>
<svg class="abs" style="left:681.8px;top:525.0px" width="24.0" height="24.0" viewBox="0 0 24 24"><defs><clipPath id="c6818"><rect width="24" height="24" rx="5.4"/></clipPath></defs><g clip-path="url(#c6818)"><rect width="24" height="24" fill="#5b5bdc"/><defs><linearGradient id="cv" x1="0" y1="0" x2="1" y2="1"><stop offset="0" stop-color="#12c4cc"/><stop offset=".55" stop-color="#5b5bdc"/><stop offset="1" stop-color="#7d2ae8"/></linearGradient></defs><rect width="24" height="24" fill="url(#cv)"/><text x="12" y="14.800" font-family="Liberation Serif, serif" font-style="italic" font-weight="bold" font-size="8.800" fill="#fff" text-anchor="middle" letter-spacing="-.4">Canva</text><rect width="24" height="24" fill="url(#gl)"/></g></svg>
<svg class="abs" style="left:712.3px;top:525.0px" width="24.0" height="24.0" viewBox="0 0 24 24"><defs><clipPath id="c7123"><rect width="24" height="24" rx="5.4"/></clipPath></defs><g clip-path="url(#c7123)"><rect width="24" height="24" fill="#3dd160"/><path d="M12 4.600a7.300 7.300 0 0 0-6.300 11l-1 3.800 3.900-1A7.300 7.300 0 1 0 12 4.600z" fill="none" stroke="#fff" stroke-width="1.400"/><path d="M9.400 8.500c-.5.300-.9 1-.7 1.900.5 2 2.600 4.100 4.700 4.700.9.200 1.600-.2 1.900-.7l.2-.9-1.700-.9-.8.700c-1-.4-2-1.400-2.400-2.400l.7-.8-.9-1.700z" fill="#fff"/><rect width="24" height="24" fill="url(#gl)"/></g></svg>
<svg class="abs" style="left:742.9px;top:525.0px" width="24.0" height="24.0" viewBox="0 0 24 24"><defs><clipPath id="c7429"><rect width="24" height="24" rx="5.4"/></clipPath></defs><g clip-path="url(#c7429)"><rect width="24" height="24" fill="#f6f7f9"/><rect x="1.500" y="1.500" width="21" height="21" rx="3.800" fill="#a9c4e6"/><path d="M1.500 13.500c6-1.500 12-.5 21-2.500v7.700a3.800 3.800 0 0 1-3.800 3.800H5.300a3.800 3.800 0 0 1-3.800-3.800z" fill="#e4e9ef"/><path d="M1.500 13.500c6-1.500 12-.5 21-2.500v2.500c-8 1.500-14 .5-21 2z" fill="#8a9db2"/><rect x="12" y="12" width="9" height="3.500" rx="1" fill="#2a2e36"/><rect x="12.600" y="15.500" width="7.800" height="6" fill="#f4f6f8"/><path d="M11.500 22l1.200-7 1.200.3-1.200 7z" fill="#5a6470"/><rect width="24" height="24" fill="url(#gl)"/></g></svg>
<svg class="abs" style="left:773.4px;top:525.0px" width="24.0" height="24.0" viewBox="0 0 24 24"><defs><clipPath id="c7734"><rect width="24" height="24" rx="5.4"/></clipPath></defs><g clip-path="url(#c7734)"><rect width="24" height="24" fill="#fbfbfd"/><rect x="8" y="4" width="12" height="16" rx="1" fill="#2b7cd3"/><rect x="8" y="4" width="12" height="4" fill="#41a5ee"/><rect x="8" y="12" width="12" height="4" fill="#185abd"/><rect x="8" y="16" width="12" height="4" fill="#103f91"/><rect x="3.500" y="7.500" width="9" height="9" rx="1" fill="#185abd"/><text x="8" y="14.500" font-family="Liberation Sans, sans-serif" font-size="6.300" font-weight="bold" fill="#fff" text-anchor="middle">W</text><rect width="24" height="24" fill="url(#gl)"/></g></svg>
<div class="abs" style="left:808px;top:525px;width:1px;height:26px;background:rgba(255,255,255,.2)"></div>
<div class="abs" style="left:818.500px;top:525.500px;width:8px;height:5px;border-radius:1.500px;background:#3f79c8"></div>
<svg class="abs" style="left:818.7px;top:527.0px" width="22.0" height="22.0" viewBox="0 0 24 24"><defs><clipPath id="c8187"><rect width="24" height="24" rx="2.5"/></clipPath></defs><g clip-path="url(#c8187)"><rect width="24" height="24" fill="#ef443b"/><path d="M10.800 6.300l5.700 5.700-5.700 5.700-5.700-5.700z" fill="#fff"/><path d="M15.200 7.400l4.600 4.600-4.600 4.600" stroke="#fff" stroke-width="1.600" fill="none"/><rect width="24" height="24" fill="url(#gl)"/></g></svg>
<div class="abs" style="left:846.8px;top:530.8px;width:26.8px;height:13.4px;background:#fbfbfb;border-top:2px solid #b9bcc0"></div>
<div class="abs" style="left:849px;top:534px;width:12px;height:1.200px;background:#4a6b9a;opacity:.7"></div>
<div class="abs" style="left:877.3px;top:530.8px;width:26.8px;height:13.4px;background:#fbfbfb;border-top:2px solid #b9bcc0"></div>
<div class="abs" style="left:907.8px;top:530.8px;width:27.3px;height:13.8px;background:#fbfbfb;border-top:2px solid #b9bcc0"></div>
<div class="abs" style="left:917px;top:534px;width:11px;height:2px;background:#2b6cb0"></div><div class="abs" style="left:917px;top:538px;width:11px;height:3px;background:#c9d4e2"></div>
<div class="abs" style="left:938.8px;top:528.3px;width:26.8px;height:18.8px;background:#fbfbfb;border-top:2px solid #b9bcc0"></div>
<div class="abs" style="left:954px;top:531px;width:9px;height:5px;background:#8a8f98"></div><div class="abs" style="left:945px;top:538px;width:14px;height:6px;background:#dfe1e5"></div>
<div class="abs" style="left:865.0px;top:543.0px;width:8.600px;height:7.500px;border-radius:1.500px;background:#1f9d5c;border:.5px solid #e8f4ec"></div>
<div class="abs" style="left:895.5px;top:543.0px;width:8.600px;height:7.500px;border-radius:1.500px;background:#1f9d5c;border:.5px solid #e8f4ec"></div>
<svg class="abs" style="left:925.500px;top:542.300px" width="9.500" height="9.500" viewBox="0 0 24 24"><circle cx="12" cy="12" r="11" fill="#fbbc05"/><path d="M12 12L2.500 6.500A11 11 0 0 1 21.500 6.500H12z" fill="#ea4335"/><path d="M12 12L2.500 6.500A11 11 0 0 0 12 23l5-8.500z" fill="#34a853"/><circle cx="12" cy="12" r="5" fill="#fff"/><circle cx="12" cy="12" r="3.900" fill="#4285f4"/></svg>
<div class="abs" style="left:957px;top:541.500px;width:8.500px;height:8.500px;border-radius:1.500px;background:linear-gradient(#8fb4dc 50%,#e8eef4 50%);border:.5px solid #dfe4ea"></div>
<svg class="abs" style="left:971px;top:523px" width="22" height="27" viewBox="0 0 22 27"><defs><linearGradient id="tr" x1="0" y1="0" x2="1" y2="0"><stop offset="0" stop-color="#6f7478"/><stop offset=".45" stop-color="#a9aeb2"/><stop offset="1" stop-color="#6a6f73"/></linearGradient></defs><path d="M1.500 5.500h19l-2 19.500c-.1 1-1 1.500-2 1.500h-11c-1 0-1.900-.5-2-1.500z" fill="url(#tr)" opacity=".95"/><ellipse cx="11" cy="5.500" rx="9.500" ry="2.600" fill="#8f9498"/><path d="M3 4.500l2.500-3 3 2 2-2.800 3 2.600 2.500-2 3 3.500c-4 2-12 2-16-.3z" fill="#e4e6e8"/><path d="M6 2.500l1.500 2M10.500 1.500l.5 2.500M14.500 2.500l-1 2" stroke="#9a9ea2" stroke-width=".6"/></svg>
<div class="abs" style="left:36.8px;top:552.700px;width:2.200px;height:2.200px;border-radius:50%;background:#e9e3da"></div><div class="abs" style="left:98.2px;top:552.700px;width:2.200px;height:2.200px;border-radius:50%;background:#e9e3da"></div><div class="abs" style="left:128.6px;top:552.700px;width:2.200px;height:2.200px;border-radius:50%;background:#e9e3da"></div><div class="abs" style="left:159.2px;top:552.700px;width:2.200px;height:2.200px;border-radius:50%;background:#e9e3da"></div><div class="abs" style="left:342.7px;top:552.700px;width:2.200px;height:2.200px;border-radius:50%;background:#e9e3da"></div><div class="abs" style="left:373.5px;top:552.700px;width:2.200px;height:2.200px;border-radius:50%;background:#e9e3da"></div><div class="abs" style="left:404.1px;top:552.700px;width:2.200px;height:2.200px;border-radius:50%;background:#e9e3da"></div><div class="abs" style="left:526.1px;top:552.700px;width:2.200px;height:2.200px;border-radius:50%;background:#e9e3da"></div><div class="abs" style="left:556.7px;top:552.700px;width:2.200px;height:2.200px;border-radius:50%;background:#e9e3da"></div><div class="abs" style="left:587.3px;top:552.700px;width:2.200px;height:2.200px;border-radius:50%;background:#e9e3da"></div><div class="abs" style="left:631.5px;top:552.700px;width:2.200px;height:2.200px;border-radius:50%;background:#e9e3da"></div><div class="abs" style="left:662.1px;top:552.700px;width:2.200px;height:2.200px;border-radius:50%;background:#e9e3da"></div><div class="abs" style="left:692.7px;top:552.700px;width:2.200px;height:2.200px;border-radius:50%;background:#e9e3da"></div><div class="abs" style="left:723.2px;top:552.700px;width:2.200px;height:2.200px;border-radius:50%;background:#e9e3da"></div><div class="abs" style="left:753.8px;top:552.700px;width:2.200px;height:2.200px;border-radius:50%;background:#e9e3da"></div><div class="abs" style="left:784.3px;top:552.700px;width:2.200px;height:2.200px;border-radius:50%;background:#e9e3da"></div>
<div class="abs" style="left:128px;top:522.500px;width:17.500px;height:10px;border-radius:5px;background:#f0473f"></div><div class="t" style="left:128px;top:524.700px;width:17.500px;text-align:center;font-size:5.600px;color:#fff;letter-spacing:-.1px">1,569</div>
<div class="abs" style="left:470px;top:523.500px;width:9.600px;height:9.600px;border-radius:50%;background:#f0473f"></div><div class="t" style="left:470px;top:525.500px;width:9.600px;text-align:center;font-size:5.800px;color:#fff">2</div>
<!--/DOCK-->
</div>
</body>
</html>
